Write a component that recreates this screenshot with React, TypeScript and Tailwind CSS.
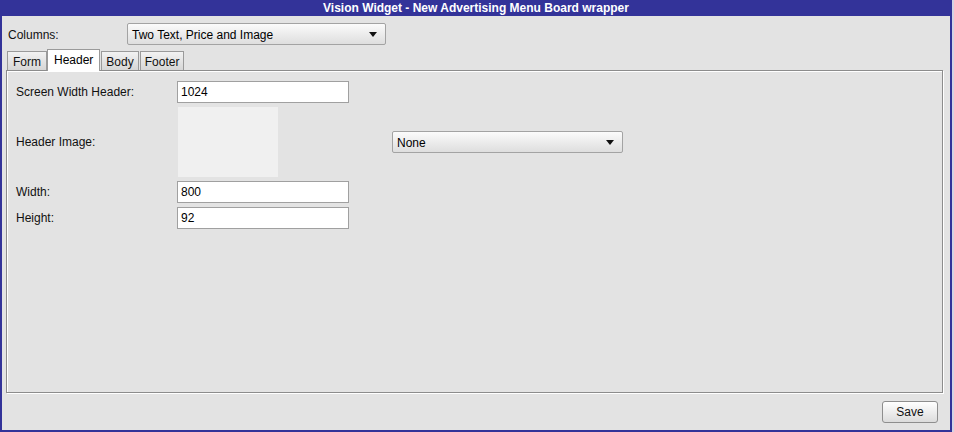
import React from 'react';

const Select = ({ value, className }: { value: string; className: string }) => (
  <div
    className={`flex items-center justify-between h-[22px] pl-[4px] pr-[8px] pt-[1px] border border-[#a3a3a3] rounded-[2px] bg-gradient-to-b from-[#fbfbfb] to-[#dedede] text-[12px] text-black ${className}`}
  >
    <span>{value}</span>
    <svg width="8" height="5" viewBox="0 0 8 5">
      <path d="M0 0h8L4 5z" fill="#111" />
    </svg>
  </div>
);

const Field = ({ value }: { value: string }) => (
  <div className="w-[172px] h-[22px] border border-[#a0a0a0] bg-white pl-[3px] text-[12px] leading-[20px] text-black">
    {value}
  </div>
);

const Tab = ({ label, active, className = '' }: { label: string; active?: boolean; className?: string }) =>
  active ? (
    <div className="h-[22px] px-[6px] bg-white border border-b-0 border-[#9a9a9a] text-[12px] leading-[20px] text-black -mb-[1px] relative z-10">
      {label}
    </div>
  ) : (
    <div
      className={`h-[19px] bg-gradient-to-b from-[#f2f2f2] to-[#d6d6d6] border border-b-0 border-[#9a9a9a] text-[12px] leading-[20px] text-[#111] ${className}`}
    >
      {label}
    </div>
  );

export default function App() {
  return (
    <div className="w-[954px] h-[432px] bg-[#d4d4e4] font-['Liberation_Sans',Arial,sans-serif]">
      <div className="w-[952px] h-[432px] flex flex-col bg-[#333399] px-[2px] pb-[2px]">
        <div className="h-[16px] text-white font-bold text-[12px] leading-[16px] text-center">
          Vision Widget - New Advertising Menu Board wrapper
        </div>
        <div className="flex-1 flex flex-col bg-[#e3e3e3]">
          <div className="flex items-center pl-[6px] pt-[7px] text-[12px] text-[#111]">
            <span className="w-[119px] pt-[1px]">Columns:</span>
            <Select value="Two Text, Price and Image" className="w-[259px]" />
          </div>

          <div className="flex items-end pl-[5px] mt-[3px] h-[22px]">
            <Tab label="Form" className="px-[5px]" />
            <Tab label="Header" active />
            <Tab label="Body" className="px-[4px] ml-[1px]" />
            <Tab label="Footer" className="px-[4px] ml-[1px]" />
          </div>

          <div className="ml-[4px] w-[937px] h-[323px] border border-[#8c8c8c] shadow-[inset_1px_1px_0_#fff,1px_1px_0_#fff] pl-[9px] pt-[10px] text-[12px] text-[#111]">
            <div className="flex items-center h-[22px]">
              <span className="w-[161px]">Screen Width Header:</span>
              <Field value="1024" />
            </div>
            <div className="flex items-center mt-[4px] h-[70px]">
              <span className="w-[162px]">Header Image:</span>
              <div className="w-[100px] h-[70px] bg-[#f0f0f0]" />
              <Select value="None" className="w-[231px] ml-[114px]" />
            </div>
            <div className="flex items-center mt-[4px] h-[22px]">
              <span className="w-[161px]">Width:</span>
              <Field value="800" />
            </div>
            <div className="flex items-center mt-[4px] h-[22px]">
              <span className="w-[161px]">Height:</span>
              <Field value="92" />
            </div>
          </div>

          <div className="flex justify-end pr-[12px] mt-[8px]">
            <button className="w-[56px] h-[22px] border border-[#8e8e8e] rounded-[3px] bg-gradient-to-b from-[#ffffff] to-[#dcdcdc] text-[12px] text-[#111]">
              Save
            </button>
          </div>
        </div>
      </div>
    </div>
  );
}
